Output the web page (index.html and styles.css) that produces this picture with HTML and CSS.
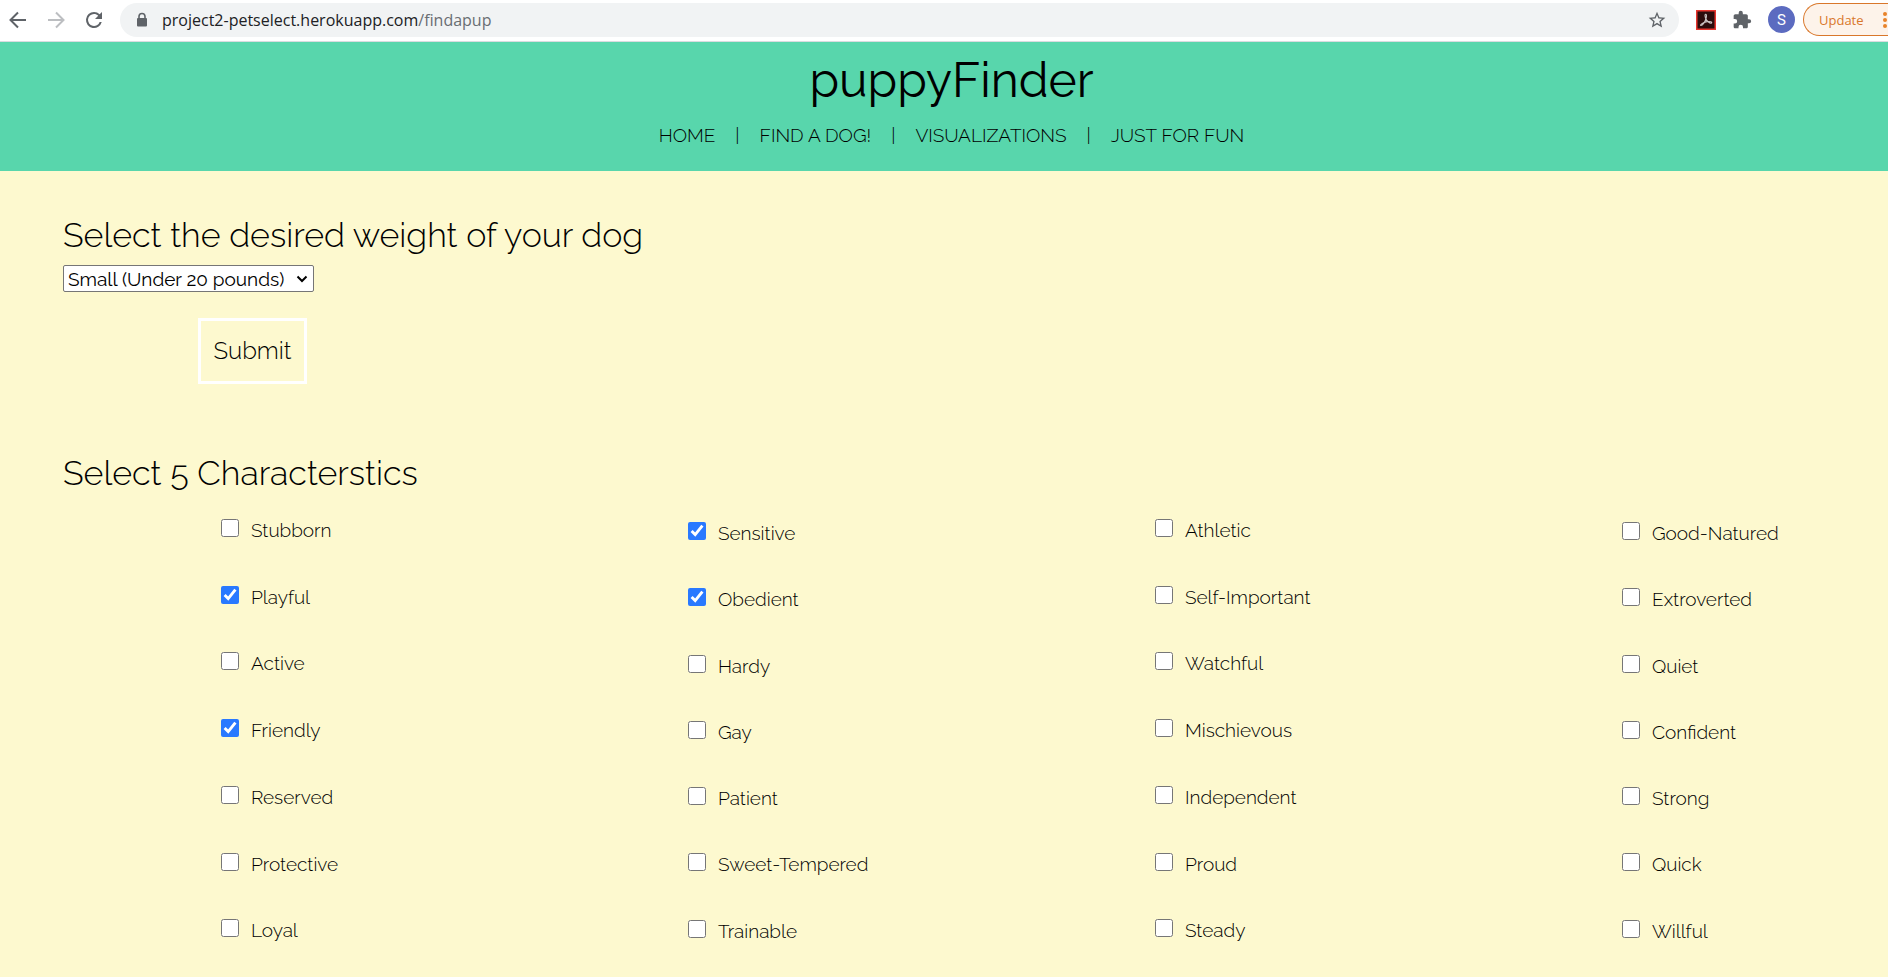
FILE: index.html
```html
<!DOCTYPE html>
<html lang="en">
<head>
<meta charset="utf-8">
<title>puppyFinder</title>
<link rel="stylesheet" href="styles.css">
</head>
<body>
<div class="toolbar">
  <button class="tool" type="button" aria-label="Back"><svg width="24" height="24" viewBox="0 0 24 24" fill="none" stroke="#5f6368" stroke-width="2"><path d="M20 12H5M12 4.500L4.500 12L12 19.500"/></svg></button>
  <button class="tool" type="button" aria-label="Forward"><svg width="24" height="24" viewBox="0 0 24 24" fill="none" stroke="#bcbec1" stroke-width="2"><path d="M4 12H19M12 4.500L19.500 12L12 19.500"/></svg></button>
  <button class="tool" type="button" aria-label="Reload"><svg width="24" height="24" viewBox="0 0 24 24"><path fill="#5f6368" d="M17.650 6.350A7.950 7.950 0 0 0 12 4a8 8 0 1 0 7.730 10h-2.080A6 6 0 1 1 12 6c1.660 0 3.140.690 4.220 1.780L13 11h7V4z"/></svg></button>
  <div class="address">
    <svg class="lock" width="16" height="16" viewBox="0 0 16 16"><path d="M5 7V4.500a3 3 0 0 1 6 0V7" fill="none" stroke="#5f6368" stroke-width="1.600"/><rect x="3" y="6" width="10" height="8.500" rx="1" fill="#5f6368"/></svg>
    <span class="url">project2-petselect.herokuapp.com<span class="path">/findapup</span></span>
    <button class="star" type="button" aria-label="Bookmark this page"><svg width="20" height="20" viewBox="0 0 24 24"><path fill="#5f6368" d="M22 9.240l-7.190-.620L12 2 9.190 8.630 2 9.240l5.460 4.730L5.820 21 12 17.270 18.180 21l-1.630-7.030L22 9.240zM12 15.400l-3.760 2.270 1-4.280-3.320-2.880 4.380-.380L12 6.100l1.710 4.040 4.380.380-3.320 2.880 1 4.280L12 15.400z"/></svg></button>
  </div>
  <button class="ext" type="button" aria-label="Acrobat"><svg width="20" height="20" viewBox="0 0 20 20"><rect x=".75" y=".75" width="18.500" height="18.500" fill="#2b0c0c" stroke="#e8352e" stroke-width="1.500"/><path d="M9.200 4.500C10.600 3.500 10.800 6 10 8.500C9 12 6.500 15.500 5 15.500C3.500 15 7 12.200 11 11.600C14 11.200 16.500 11.800 15.500 13C14.200 14 10.500 11 9.500 8C9 6.500 8.700 5.200 9.200 4.500Z" fill="none" stroke="#c9c2c2" stroke-width="1.100"/></svg></button>
  <button class="ext" type="button" aria-label="Extensions"><svg width="20" height="20" viewBox="0 0 24 24"><path fill="#5f6368" d="M20.500 11H19V7c0-1.100-.9-2-2-2h-4V3.500a2.500 2.500 0 0 0-5 0V5H4c-1.100 0-2 .9-2 2v3.800h1.500a2.700 2.700 0 0 1 0 5.400H2V20c0 1.100.9 2 2 2h3.800v-1.500a2.700 2.700 0 0 1 5.400 0V22H17c1.100 0 2-.9 2-2v-4h1.500a2.500 2.500 0 0 0 0-5z"/></svg></button>
  <button class="avatar" type="button">S</button>
  <button class="update" type="button">Update<svg width="6" height="18" viewBox="0 0 6 18" fill="#e8832a"><circle cx="3" cy="3" r="2"/><circle cx="3" cy="9" r="2"/><circle cx="3" cy="15" r="2"/></svg></button>
</div>
<header class="header">
  <h1 class="brand">puppyFinder</h1>
  <nav class="nav">
    <a href="#">HOME</a><span>|</span><a href="#">FIND A DOG!</a><span>|</span><a href="#">VISUALIZATIONS</a><span>|</span><a href="#">JUST FOR FUN</a>
  </nav>
</header>
<main>
  <form>
    <section class="weight">
      <h2 class="heading"><label for="weight">Select the desired weight of your dog</label></h2>
      <div class="select-box">
        <select class="select" id="weight"><option>Small (Under 20 pounds)</option></select>
        <svg class="chevron" width="12" height="8" viewBox="0 0 12 8" fill="none" stroke="#000" stroke-width="2"><path d="M1.500 1.500L6 6L10.500 1.500"/></svg>
      </div>
      <button class="submit" type="button">Submit</button>
    </section>
    <section>
      <h2 class="heading">Select 5 Characterstics</h2>
      <div class="traits">
        <div class="column">
          <label class="trait"><input type="checkbox">Stubborn</label>
          <label class="trait"><input type="checkbox" checked>Playful</label>
          <label class="trait"><input type="checkbox">Active</label>
          <label class="trait"><input type="checkbox" checked>Friendly</label>
          <label class="trait"><input type="checkbox">Reserved</label>
          <label class="trait"><input type="checkbox">Protective</label>
          <label class="trait"><input type="checkbox">Loyal</label>
        </div>
        <div class="column lower">
          <label class="trait"><input type="checkbox" checked>Sensitive</label>
          <label class="trait"><input type="checkbox" checked>Obedient</label>
          <label class="trait"><input type="checkbox">Hardy</label>
          <label class="trait"><input type="checkbox">Gay</label>
          <label class="trait"><input type="checkbox">Patient</label>
          <label class="trait"><input type="checkbox">Sweet-Tempered</label>
          <label class="trait"><input type="checkbox">Trainable</label>
        </div>
        <div class="column">
          <label class="trait"><input type="checkbox">Athletic</label>
          <label class="trait"><input type="checkbox">Self-Important</label>
          <label class="trait"><input type="checkbox">Watchful</label>
          <label class="trait"><input type="checkbox">Mischievous</label>
          <label class="trait"><input type="checkbox">Independent</label>
          <label class="trait"><input type="checkbox">Proud</label>
          <label class="trait"><input type="checkbox">Steady</label>
        </div>
        <div class="column lower">
          <label class="trait"><input type="checkbox">Good-Natured</label>
          <label class="trait"><input type="checkbox">Extroverted</label>
          <label class="trait"><input type="checkbox">Quiet</label>
          <label class="trait"><input type="checkbox">Confident</label>
          <label class="trait"><input type="checkbox">Strong</label>
          <label class="trait"><input type="checkbox">Quick</label>
          <label class="trait"><input type="checkbox">Willful</label>
        </div>
      </div>
    </section>
  </form>
</main>
</body>
</html>
```
FILE: styles.css
```css
* { box-sizing: border-box; }

body {
  margin: 0;
  background: #fdf9cf;
  color: #000;
  font-family: Raleway, Lato, sans-serif;
  font-size: 19px;
  font-weight: 300;
}

button {
  margin: 0;
  padding: 0;
  border: 0;
  background: none;
  color: inherit;
  font: inherit;
}

svg { display: block; }

.toolbar {
  display: flex;
  align-items: center;
  height: 42px;
  padding: 0 0 2px 6px;
  background: #fff;
  border-bottom: 1px solid #dadce0;
}

.tool { margin-right: 14px; }

.address {
  display: flex;
  flex: 1;
  align-items: center;
  height: 34px;
  margin-right: 17px;
  padding: 0 12px 0 14px;
  border-radius: 17px;
  background: #f1f3f4;
}

.url {
  flex: 1;
  margin-left: 12px;
  color: #202124;
  font-family: "Open Sans", sans-serif;
  font-size: 16px;
  font-weight: 400;
}

.path { color: #6a6e73; }

.ext { margin-right: 16px; }

.avatar {
  width: 27px;
  height: 27px;
  margin-right: 8px;
  border-radius: 50%;
  background: #5c6bc0;
  color: #fff;
  font-family: Roboto, sans-serif;
  font-size: 15px;
  font-weight: 400;
}

.update {
  display: flex;
  align-items: center;
  justify-content: space-between;
  width: 85px;
  height: 33px;
  padding-left: 15px;
  border: 1px solid #d9772b;
  border-right: 0;
  border-radius: 17px 0 0 17px;
  background: #fdf3ea;
  color: #d9772b;
  font-family: "Open Sans", sans-serif;
  font-size: 13px;
  font-weight: 400;
}

.header {
  padding: 6px 0 24px 15px;
  background: #58d6ac;
  text-align: center;
}

.brand {
  margin: 0;
  font-size: 48px;
  font-weight: 400;
  line-height: 64px;
}

.nav {
  display: flex;
  justify-content: center;
  gap: 20px;
  margin-top: 11px;
  line-height: 24px;
}

.nav a {
  color: inherit;
  text-decoration: none;
}

.weight {
  padding-bottom: 67px;
}

.heading {
  margin: 0 63px;
  font-size: 34px;
  font-weight: 300;
  line-height: 44px;
}

.weight .heading { padding-top: 42px; }

.select-box {
  position: relative;
  width: 251px;
  margin: 8px 63px 0;
}

.select {
  display: block;
  width: 100%;
  height: 27px;
  padding: 0 4px;
  border: 1px solid #767676;
  border-radius: 2px;
  appearance: none;
  background: #fff;
  color: #000;
  font: inherit;
  font-weight: 400;
  font-variant-numeric: oldstyle-nums;
}

.chevron {
  position: absolute;
  top: 10px;
  right: 6px;
  pointer-events: none;
}

.submit {
  display: block;
  width: 109px;
  height: 66px;
  margin: 26px 0 0 198px;
  padding-bottom: 2px;
  border: 3px solid #fff;
  font-size: 24px;
}

.traits {
  display: grid;
  grid-template-columns: repeat(4, 1fr);
  padding: 23px 10px 0;
}

.column {
  display: grid;
  grid-auto-rows: 1fr;
  min-height: 464px;
  padding-left: 211px;
}

.lower {
  margin-top: 3px;
}

.trait {
  display: flex;
  align-items: start;
  gap: 12px;
  line-height: 24px;
}

.trait input {
  width: 18px;
  height: 18px;
  margin: 1px 0 0;
  accent-color: #2979ff;
}
```
